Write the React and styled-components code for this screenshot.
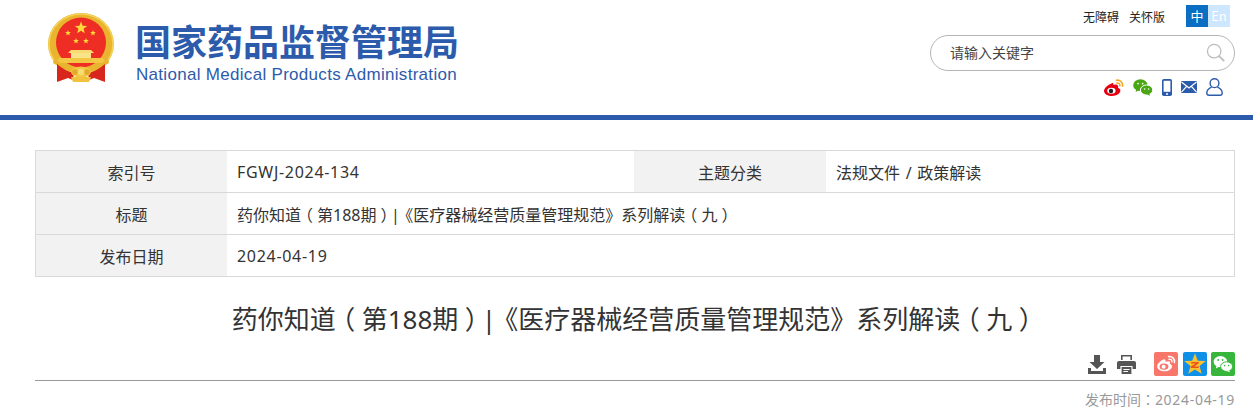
import React from 'react';
import styled, { createGlobalStyle } from 'styled-components';

const GlobalStyle = createGlobalStyle`
  html, body {
    margin: 0;
    padding: 0;
    background: #fff;
    font-family: "Noto Sans", "Noto Sans CJK SC", sans-serif;
    color: #333;
  }
  * { box-sizing: border-box; }
`;

const Star = ({ cx, cy, r, fill = '#ffd93b', rot = 0 }) => {
    const pts = [];
    for (let i = 0; i < 10; i++) {
        const rad = i % 2 === 0 ? r : r * 0.42;
        const a = ((-90 + i * 36 + rot) * Math.PI) / 180;
        pts.push(`${(cx + rad * Math.cos(a)).toFixed(2)},${(cy + rad * Math.sin(a)).toFixed(2)}`);
    }
    return <polygon points={pts.join(' ')} fill={fill} />;
};

const Emblem = () => (
    <svg width="66" height="70" viewBox="0 0 66 70">
        <ellipse cx="33" cy="31" rx="33" ry="31" fill="#e9b52e" />
        <ellipse cx="33" cy="31" rx="32" ry="30" fill="none" stroke="#f6d35a" strokeWidth="1.5" />
        <circle cx="33" cy="29.5" r="25" fill="#ee2d24" />
        <Star cx={33} cy={15} r={6.5} />
        <Star cx={20} cy={20} r={3} />
        <Star cx={45} cy={20} r={3} />
        <Star cx={28} cy={28} r={3} />
        <Star cx={38} cy={28} r={3} />
        <path d="M23 37 H43 L46 40 H20 Z" fill="#f8dc72" />
        <path d="M23 40 H43 V45 H23 Z" fill="#fbe38a" />
        <path d="M11 45 H55 L58 50 H8 Z" fill="#f3c743" />
        <path d="M6 46 Q18 55 33 55 Q48 55 60 46 L61 50 Q48 59 33 59 Q18 59 5 50 Z" fill="#e9b52e" />
        <path d="M9 51 Q17 58 26 60 L25 67 L20 65 L9 69 Z" fill="#d8261c" />
        <path d="M57 51 Q49 58 40 60 L41 67 L46 65 L57 69 Z" fill="#d8261c" />
        <ellipse cx="33" cy="59" rx="10" ry="5.5" fill="#f3c743" />
        <circle cx="27" cy="59" r="2.8" fill="#e3a92a" />
        <circle cx="39" cy="59" r="2.8" fill="#e3a92a" />
        <circle cx="33" cy="59" r="3.2" fill="#f8dc72" />
        <path d="M23 64 H43 L41 69 H25 Z" fill="#f0c23e" />
    </svg>
);

const SearchGlyph = () => (
    <svg width="20" height="20" viewBox="0 0 22 22" fill="none" stroke="#bdbdbd">
        <circle cx="9" cy="9" r="7.4" strokeWidth="1.4" />
        <path d="M14.4 14.4 L20 20" strokeWidth="2" />
    </svg>
);

const WeiboTop = () => (
    <svg width="20" height="17" viewBox="0 0 20 17">
        <path d="M8 4.2 C3.5 5.6 0 9.5 0 12 C0 15 4 17 8 17 C12.8 17 16.4 14.4 16.4 11.6 C16.4 10 15 9.2 14 8.8 C14.6 7 14 5.6 11.6 5.6 C10.6 5.6 9.8 6 9.4 6.2 C9.8 4.4 9 3.8 8 4.2 Z" fill="#e60012" />
        <ellipse cx="7.4" cy="11.8" rx="4.2" ry="3" fill="#fff" />
        <circle cx="7" cy="12" r="2.2" fill="#222" />
        <path d="M12.4 1.2 C16 0.6 19 3.2 18.6 7.2" fill="none" stroke="#f5a623" strokeWidth="1.6" strokeLinecap="round" />
        <path d="M12.8 4 C14.8 3.6 16.2 5 15.9 6.9" fill="none" stroke="#f5a623" strokeWidth="1.4" strokeLinecap="round" />
    </svg>
);

const WechatTop = () => (
    <svg width="20" height="17" viewBox="0 0 20 17">
        <ellipse cx="7.4" cy="6.2" rx="7.2" ry="5.9" fill="#4ba614" />
        <path d="M3.4 10 L2.6 13 L6.4 11 Z" fill="#4ba614" />
        <ellipse cx="13.6" cy="11" rx="6.2" ry="5" fill="#4ba614" stroke="#fff" strokeWidth="1" />
        <path d="M16 14.6 L17.2 16.8 L13.8 15.6 Z" fill="#4ba614" />
        <circle cx="5" cy="4.6" r="0.9" fill="#fff" />
        <circle cx="9.6" cy="4.6" r="0.9" fill="#fff" />
        <circle cx="11.6" cy="10" r="0.8" fill="#fff" />
        <circle cx="15.6" cy="10" r="0.8" fill="#fff" />
    </svg>
);

const PhoneGlyph = () => (
    <svg width="10" height="17" viewBox="0 0 10 17">
        <rect x="0" y="0" width="10" height="17" rx="1.8" fill="#2d5bab" />
        <rect x="1.6" y="1.8" width="6.8" height="11" fill="#fff" />
        <circle cx="5" cy="15" r="1" fill="#fff" />
    </svg>
);

const MailGlyph = () => (
    <svg width="16" height="12" viewBox="0 0 16 12">
        <rect width="16" height="12" rx="1" fill="#2d5bab" />
        <path d="M0.5 1 L8 7 L15.5 1 M0.5 11.2 L5.6 5.4 M15.5 11.2 L10.4 5.4" fill="none" stroke="#fff" strokeWidth="1.2" />
    </svg>
);

const UserGlyph = () => (
    <svg width="17" height="18" viewBox="0 0 17 18" fill="none" stroke="#2d5bab" strokeWidth="1.4">
        <circle cx="8.5" cy="5.2" r="4.4" />
        <path d="M5.6 9.2 C2.6 10.4 0.8 12.6 0.8 15 C0.8 16.4 1.6 17.2 3 17.2 H14 C15.4 17.2 16.2 16.4 16.2 15 C16.2 12.6 14.4 10.4 11.4 9.2" />
    </svg>
);

const DownloadGlyph = () => (
    <svg width="18" height="19" viewBox="0 0 18 19" fill="#555">
        <path d="M6 0 H12 V7 H16.5 L9 14 L1.5 7 H6 Z" />
        <path d="M0 13 H3 V16 H15 V13 H18 V19 H0 Z" />
    </svg>
);

const PrintGlyph = () => (
    <svg width="19" height="19" viewBox="0 0 19 19" fill="#555">
        <path d="M4 0 H15 V5 H13.4 V1.6 H5.6 V5 H4 Z" />
        <path d="M2 6 H17 C18.2 6 19 6.8 19 8 V14 H15.6 V11 H3.4 V14 H0 V8 C0 6.8 0.8 6 2 6 Z" />
        <path d="M4.6 12 H14.4 V19 H4.6 Z M6.4 14 V15 H12.6 V14 Z M6.4 16 V17 H11 V16 Z" fillRule="evenodd" />
    </svg>
);

const WeiboShare = () => (
    <svg width="24" height="24" viewBox="0 0 24 24">
        <rect width="24" height="24" rx="2" fill="#f8766a" />
        <path d="M9.6 7.4 C6 8.8 3.2 12 3.2 14.4 C3.2 17.4 6.8 19.2 10.4 19.2 C14.8 19.2 18 16.8 18 14.4 C18 13 16.8 12.4 15.9 12 C16.5 10.6 16.2 9.2 14.2 9.2 C13.2 9.2 12.2 9.6 11.6 9.9 C12 8 11 7 9.6 7.4 Z" fill="#fff" />
        <ellipse cx="10" cy="14.6" rx="4.4" ry="3.2" fill="#f8766a" />
        <circle cx="9.6" cy="14.8" r="2" fill="#fff" />
        <path d="M14.6 4.6 C18 4 21 6.6 20.4 10.4" fill="none" stroke="#fff" strokeWidth="1.6" strokeLinecap="round" />
        <path d="M15 7.2 C16.8 6.9 18.2 8.2 17.9 9.9" fill="none" stroke="#fff" strokeWidth="1.4" strokeLinecap="round" />
    </svg>
);

const QzoneShare = () => (
    <svg width="24" height="24" viewBox="0 0 24 24">
        <rect width="24" height="24" rx="2" fill="#0e8fe8" />
        <Star cx={12} cy={12.6} r={11.4} fill="#fbc02d" />
        <path d="M8.2 10 H15.6 V11.4 L11 14.6 H15.8 V16 H7.8 V14.6 L12.6 11.4 H8.2 Z" fill="#e8541a" />
    </svg>
);

const WechatShare = () => (
    <svg width="24" height="24" viewBox="0 0 24 24">
        <rect width="24" height="24" rx="2" fill="#37b63b" />
        <ellipse cx="9.4" cy="9.6" rx="6.8" ry="5.6" fill="#fff" />
        <path d="M5.6 13.4 L4.8 16.4 L8.6 14.6 Z" fill="#fff" />
        <ellipse cx="15.6" cy="14.6" rx="6" ry="4.8" fill="#fff" stroke="#37b63b" strokeWidth="1" />
        <path d="M18 18 L19 20.2 L15.8 19 Z" fill="#fff" />
        <circle cx="7.2" cy="8" r="0.9" fill="#37b63b" />
        <circle cx="11.6" cy="8" r="0.9" fill="#37b63b" />
        <circle cx="13.6" cy="13.6" r="0.8" fill="#37b63b" />
        <circle cx="17.6" cy="13.6" r="0.8" fill="#37b63b" />
    </svg>
);

const Header = styled.header`
    height: 120px;
    border-bottom: 5px solid #2d5bab;
    padding: 0 18px 0 48px;
    display: flex;
    justify-content: space-between;
`;

const Brand = styled.div`
    display: flex;
    align-items: flex-start;
    padding-top: 13px;
    gap: 22px;
`;

const BrandText = styled.div`
    padding-top: 1px;
    color: #2d5bab;
`;

const BrandName = styled.div`
    font-family: "Noto Sans CJK SC", sans-serif;
    font-size: 36px;
    font-weight: 700;
    line-height: 52px;
    margin-left: -1px;
    white-space: nowrap;
`;

const BrandEn = styled.div`
    font-family: "Liberation Sans", sans-serif;
    font-size: 17px;
    line-height: 18px;
    letter-spacing: 0.3px;
    white-space: nowrap;
`;

const Tools = styled.div`
    width: 305px;
    display: flex;
    flex-direction: column;
    align-items: flex-end;
    padding-top: 5px;
`;

const TopLinks = styled.div`
    display: flex;
    align-items: center;
    height: 22px;
    padding-right: 5px;
    font-family: "Noto Sans CJK SC", sans-serif;
    font-size: 12px;
    color: #222;
`;

const TopLink = styled.a`
    margin-right: 10px;
    &:last-of-type { margin-right: 21px; }
`;

const Lang = styled.span`
    width: 22px;
    height: 22px;
    line-height: 22px;
    text-align: center;
    font-size: 13px;
    color: #fff;
    background: ${p => (p.$on ? '#0a6fc2' : '#cce7ff')};
`;

const SearchBox = styled.div`
    width: 305px;
    height: 36px;
    margin-top: 8px;
    border: 1px solid #b5b5b5;
    border-radius: 18px;
    padding: 0 8px 0 19px;
    display: flex;
    align-items: center;
    justify-content: space-between;
    font-family: "Noto Sans CJK SC", sans-serif;
    font-size: 14px;
    color: #444;
`;

const Placeholder = styled.span`
    margin-bottom: 2px;
`;

const IconRow = styled.div`
    display: flex;
    align-items: center;
    height: 20px;
    margin-top: 6px;
    margin-right: 12px;
    gap: 9px;
`;

const Main = styled.main`
    padding: 30px 18px 0 35px;
`;

const InfoTable = styled.div`
    display: grid;
    grid-template-columns: 191px 407px 192px 1fr;
    grid-auto-rows: 42px;
    border: 1px solid #d9d9d9;
    border-bottom: 0;
    height: 127px;
    font-size: 16px;
    color: #333;
`;

const Label = styled.div`
    background: #f2f2f2;
    border-bottom: 1px solid #d9d9d9;
    display: flex;
    align-items: center;
    justify-content: center;
`;

const Value = styled.div`
    grid-column: ${p => (p.$wide ? '2 / -1' : 'auto')};
    border-bottom: 1px solid #d9d9d9;
    padding-left: 10px;
    display: flex;
    align-items: center;
    white-space: pre;
    word-spacing: 1.5px;
`;

const Code = styled.span`
    letter-spacing: 0.7px;
`;

// halt trims the blank half of the fullwidth glyph, the padding centres it in its cell
const Paren = styled.span`
    font-feature-settings: "halt";
    padding: 0 0.25em;
`;

const Colon = styled.span`
    font-family: "Noto Sans CJK TC", sans-serif;
`;

const Bar = styled.span`
    margin-left: -0.1em;
    letter-spacing: -0.15em;
`;

const TitleText = () => (
    <span>
        药你知道<Paren>（</Paren>第188期<Paren>）</Paren><Bar>|</Bar>《医疗器械经营质量管理规范》系列解读<Paren>（</Paren>九<Paren>）</Paren>
    </span>
);

const Title = styled.h1`
    margin: 19px 0 0;
    font-size: 26px;
    line-height: 46px;
    font-weight: 400;
    text-align: center;
    color: #333;
    white-space: nowrap;
`;

const ShareRow = styled.div`
    display: flex;
    justify-content: flex-end;
    align-items: center;
    height: 39px;
    padding-top: 6px;
    border-bottom: 1px solid #999;
`;

const ShareGroup = styled.div`
    display: flex;
    align-items: center;
    gap: ${p => p.$gap}px;
    margin-right: ${p => p.$right || 0}px;
`;

const PubDate = styled.div`
    margin-top: 8px;
    text-align: right;
    font-size: 14px;
    line-height: 20px;
    color: #999;
`;

const App = () => {
    return (
        <>
            <GlobalStyle />
            <Header>
                <Brand>
                    <Emblem />
                    <BrandText>
                        <BrandName>国家药品监督管理局</BrandName>
                        <BrandEn>National Medical Products Administration</BrandEn>
                    </BrandText>
                </Brand>
                <Tools>
                    <TopLinks>
                        <TopLink>无障碍</TopLink>
                        <TopLink>关怀版</TopLink>
                        <Lang $on>中</Lang>
                        <Lang>En</Lang>
                    </TopLinks>
                    <SearchBox>
                        <Placeholder>请输入关键字</Placeholder>
                        <SearchGlyph />
                    </SearchBox>
                    <IconRow>
                        <WeiboTop />
                        <WechatTop />
                        <PhoneGlyph />
                        <MailGlyph />
                        <UserGlyph />
                    </IconRow>
                </Tools>
            </Header>
            <Main>
                <InfoTable>
                    <Label>索引号</Label>
                    <Value><Code>FGWJ-2024-134</Code></Value>
                    <Label>主题分类</Label>
                    <Value>法规文件 / 政策解读</Value>
                    <Label>标题</Label>
                    <Value $wide><TitleText /></Value>
                    <Label>发布日期</Label>
                    <Value $wide><Code>2024-04-19</Code></Value>
                </InfoTable>
                <Title><TitleText /></Title>
                <ShareRow>
                    <ShareGroup $gap={11} $right={18}>
                        <DownloadGlyph />
                        <PrintGlyph />
                    </ShareGroup>
                    <ShareGroup $gap={4.5}>
                        <WeiboShare />
                        <QzoneShare />
                        <WechatShare />
                    </ShareGroup>
                </ShareRow>
                <PubDate>发布时间<Colon>：</Colon><Code>2024-04-19</Code></PubDate>
            </Main>
        </>
    );
};

export default App;
